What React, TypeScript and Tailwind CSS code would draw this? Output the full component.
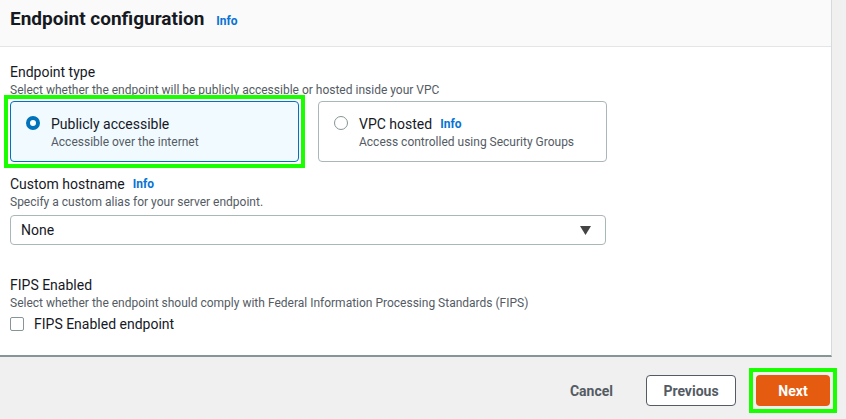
import { useState } from "react";

function InfoLink() {
  return <span className="ml-2 text-xs font-bold text-[#0972d3]">Info</span>;
}

export default function App() {
  const [type, setType] = useState("public");
  const [fips, setFips] = useState(false);

  const options = [
    { id: "public", label: "Publicly accessible", desc: "Accessible over the internet", info: false },
    { id: "vpc", label: "VPC hosted", desc: "Access controlled using Security Groups", info: true },
  ];

  return (
    <div className="h-[419px] w-[846px] overflow-hidden bg-[#eff0ef] font-['Roboto',sans-serif] text-[#16191f]">
      <div className="w-[832px] border-r border-b-2 border-r-[#d5dbdb] border-b-[#879596] bg-white">
        <div className="flex h-[47px] items-center border-b border-[#e3e6e6] bg-[#fafafa] px-[10px] pb-[8px]">
          <h2 className="text-[19px] font-bold">Endpoint configuration</h2>
          <span className="ml-3 mt-1 text-xs font-bold text-[#0972d3]">Info</span>
        </div>

        <div className="px-[10px] pt-[15px] pb-[21px]">
          <p className="text-sm leading-5">Endpoint type</p>
          <p className="text-xs leading-4 text-[#545b64]">
            Select whether the endpoint will be publicly accessible or hosted inside your VPC
          </p>
          <div className="mt-[3px] flex gap-[19px]">
            {options.map((o) => {
              const selected = type === o.id;
              return (
                <div
                  key={o.id}
                  className={selected ? "-m-[6px] border-[4px] border-[#1aff00] p-[2px]" : ""}
                >
                  <button
                    onClick={() => setType(o.id)}
                    className={`flex h-[61px] w-[289px] items-start gap-[11px] rounded-sm border px-[15px] pt-[12px] text-left ${
                      selected ? "border-[#0073bb] bg-[#f1faff]" : "border-[#aab7b8] bg-white"
                    }`}
                  >
                    <span
                      className={`mt-[2px] flex h-[14px] w-[14px] shrink-0 items-center justify-center rounded-full ${
                        selected ? "border-[4px] border-[#0073bb] bg-white" : "border border-[#879596] bg-white"
                      }`}
                    />
                    <span className="flex flex-col">
                      <span className="flex items-center text-sm leading-5">
                        {o.label}
                        {o.info && <InfoLink />}
                      </span>
                      <span className="text-xs leading-4 text-[#545b64]">{o.desc}</span>
                    </span>
                  </button>
                </div>
              );
            })}
          </div>

          <div className="mt-[12px]">
            <p className="flex items-center text-sm leading-5">
              Custom hostname
              <InfoLink />
            </p>
            <p className="text-xs leading-4 text-[#545b64]">Specify a custom alias for your server endpoint.</p>
            <div className="mt-[5px] flex h-[30px] w-[596px] items-center justify-between rounded-sm border border-[#aab7b8] pl-[10px] pr-[14px] text-sm">
              <span>None</span>
              <svg width="11" height="9" viewBox="0 0 11 9">
                <path d="M0 0h11L5.5 9z" fill="#444" />
              </svg>
            </div>
          </div>

          <div className="mt-[30px]">
            <p className="text-sm leading-5">FIPS Enabled</p>
            <p className="text-xs leading-4 text-[#545b64]">
              Select whether the endpoint should comply with Federal Information Processing Standards (FIPS)
            </p>
            <label className="mt-[3px] flex cursor-pointer items-center gap-[10px] text-sm">
              <span
                onClick={() => setFips(!fips)}
                className={`h-[14px] w-[14px] rounded-[2px] border ${
                  fips ? "border-[#0073bb] bg-[#0073bb]" : "border-[#879596] bg-white"
                }`}
              />
              FIPS Enabled endpoint
            </label>
          </div>
        </div>
      </div>

      <div className="flex items-center justify-end pt-[18px] pr-[9px]">
        <button className="mr-[33px] text-sm font-bold text-[#545b64]">Cancel</button>
        <button className="h-[31px] w-[90px] rounded-sm border border-[#545b64] bg-white text-sm font-bold text-[#545b64]">
          Previous
        </button>
        <div className="-my-[7px] ml-[13px] border-[4px] border-[#1aff00] p-[3px]">
          <button className="h-[31px] w-[74px] rounded-sm bg-[#e55c11] text-sm font-bold text-white">Next</button>
        </div>
      </div>
    </div>
  );
}
